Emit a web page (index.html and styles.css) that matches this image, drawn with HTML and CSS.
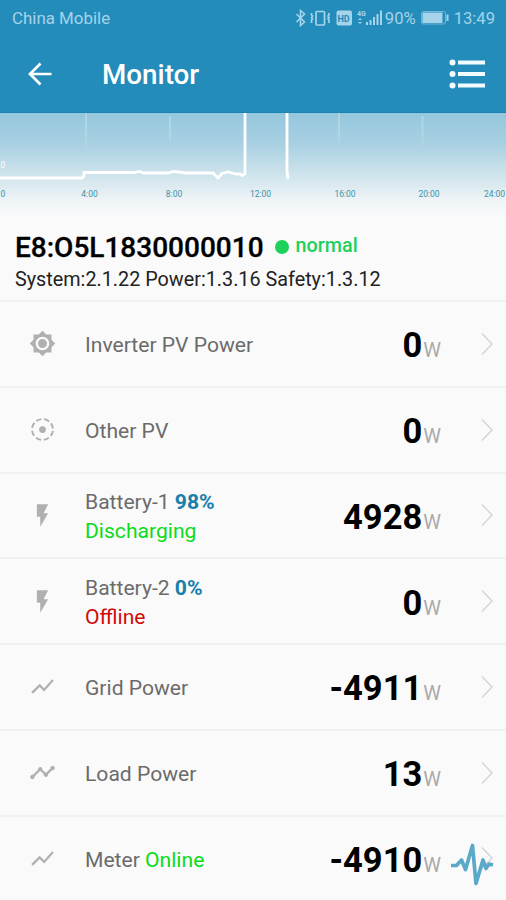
FILE: index.html
```
<!DOCTYPE html>
<html lang="en">
<head>
  <meta charset="UTF-8">
  <meta name="viewport" content="width=device-width, initial-scale=1.0">
  <title>Monitor</title>
  <link rel="stylesheet" href="styles.css">
</head>
<body>
  <svg class="defs" width="0" height="0">
    <symbol id="sun" viewBox="0 0 24 24"><path d="M20 8.69V4h-4.69L12 .69 8.69 4H4v4.69L.69 12 4 15.31V20h4.69L12 23.31 15.31 20H20v-4.69L23.31 12 20 8.69zM12 18c-3.31 0-6-2.69-6-6s2.69-6 6-6 6 2.69 6 6-2.69 6-6 6zm0-10c-2.21 0-4 1.79-4 4s1.79 4 4 4 4-1.79 4-4-1.79-4-4-4z"/></symbol>
    <symbol id="tilt" viewBox="0 0 24 24"><circle cx="12" cy="12" r="9.3" fill="none" stroke="currentColor" stroke-width="1.7" stroke-dasharray="4.9 2.4" stroke-dashoffset="-1.2"/><circle cx="12" cy="12" r="3"/></symbol>
    <symbol id="bolt" viewBox="0 0 24 24"><path d="M7 2v11h3v9l7-12h-4l4-8z"/></symbol>
    <symbol id="line" viewBox="0 0 24 24"><path d="M3.5 18.49l6-6.01 4 4L22 6.92l-1.41-1.41-7.09 7.97-4-4L2 16.99z"/></symbol>
    <symbol id="timeline" viewBox="0 0 24 24"><path d="M23 8c0 1.1-.9 2-2 2-.18 0-.35-.02-.51-.07l-3.56 3.55c.05.16.07.34.07.52 0 1.1-.9 2-2 2s-2-.9-2-2c0-.18.02-.36.07-.52l-2.55-2.55c-.16.05-.34.07-.52.07s-.36-.02-.52-.07l-4.55 4.56c.05.16.07.33.07.51 0 1.1-.9 2-2 2s-2-.9-2-2 .9-2 2-2c.18 0 .35.02.51.07l4.56-4.55C8.02 9.36 8 9.18 8 9c0-1.1.9-2 2-2s2 .9 2 2c0 .18-.02.36-.07.52l2.55 2.55c.16-.05.34-.07.52-.07s.36.02.52.07l3.55-3.56C19.02 8.35 19 8.18 19 8c0-1.1.9-2 2-2s2 .9 2 2z"/></symbol>
    <symbol id="chevron" viewBox="0 0 12 24"><path d="M1 1.5L11 12 1 22.5" fill="none" stroke="currentColor" stroke-width="1.4"/></symbol>
  </svg>

  <header>
    <div class="status-bar">
      <span class="carrier">China Mobile</span>
      <div class="status-icons">
        <svg width="90" height="20" viewBox="0 0 90 20" fill="none" stroke="currentColor">
          <path d="M1.5 6l8 8-4 3.500v-15l4 3.500-8 8" stroke-width="1.600"/>
          <rect x="21" y="3.500" width="8.500" height="13.500" rx="1" stroke-width="1.700"/>
          <path d="M16.500 5v2l1 1-1 1.500 1 1.500-1 1v3M34 5v2l-1 1 1 1.500-1 1.500 1 1v3" stroke-width="1.700"/>
          <rect x="41.500" y="2.500" width="15.500" height="15" rx="2" fill="currentColor" stroke="none"/>
          <text class="hd" x="42.500" y="13.500">HD</text>
          <text class="net" x="62" y="8">4G</text>
          <path d="M63 12l2-2 2 2zM63 14l2 2 2-2z" fill="currentColor" stroke="none"/>
          <path d="M72 17v-3M75.500 17v-5M79 17V9M82.500 17V6M86 17V2.500" stroke-width="2"/>
        </svg>
        <span class="percent">90%</span>
        <svg class="battery" width="28" height="14" viewBox="0 0 28 14">
          <rect x=".5" y=".5" width="24" height="12.500" rx="2" fill="none" stroke="currentColor" opacity=".6"/>
          <rect x="1.500" y="1.500" width="20" height="10.500" fill="currentColor"/>
          <path d="M26.500 3.500v6.500" stroke="currentColor" stroke-width="2"/>
        </svg>
        <span class="clock">13:49</span>
      </div>
    </div>
    <div class="title-bar">
      <svg width="24" height="24" viewBox="0 0 24 24"><path d="M23.500 12H2M12.500 1.500L2 12l10.500 10.500" fill="none" stroke="#fff" stroke-width="2.700"/></svg>
      <h1>Monitor</h1>
      <svg class="menu" width="36" height="30" viewBox="0 0 36 30" fill="#f2fbff">
        <circle cx="3.500" cy="3.500" r="3"/><rect x="9" y="1.500" width="27" height="4"/>
        <circle cx="3.500" cy="15" r="3"/><rect x="9" y="13" width="27" height="4"/>
        <circle cx="3.500" cy="26.500" r="3"/><rect x="9" y="24.500" width="27" height="4"/>
      </svg>
    </div>
  </header>

  <svg class="chart" width="506" height="105" viewBox="0 0 506 105">
    <path class="grid" d="M86 0v40M170 3v25M339 0v30M422.500 3v30"/>
    <path class="curve" d="M0 65H82q2 0 2-5.500h50l5-1 5 1.500h24l6-1.500 12 1.500h27l5 5 4-4.500 6-1.500 8 2 4 0 2 1.500 3-1.500V0"/>
    <path class="curve" d="M287 0v58l1 8"/>
    <g class="axis">
      <text x="3" y="55" class="y-label">0</text>
      <text x="3" y="84">0</text>
      <text x="89.500" y="84">4:00</text>
      <text x="174" y="84">8:00</text>
      <text x="260.500" y="84">12:00</text>
      <text x="345" y="84">16:00</text>
      <text x="429" y="84">20:00</text>
      <text x="494.500" y="84">24:00</text>
    </g>
  </svg>

  <section class="device">
    <div class="device-name">
      <h2>E8:O5L1830000010</h2>
      <span class="dot"></span>
      <span class="state">normal</span>
    </div>
    <p class="versions">System:2.1.22 Power:1.3.16 Safety:1.3.12</p>
  </section>

  <ul class="rows">
    <li>
      <svg class="icon"><use href="#sun"/></svg>
      <div class="label">Inverter PV Power</div>
      <div class="value">0<small>W</small></div>
      <svg class="chevron"><use href="#chevron"/></svg>
    </li>
    <li>
      <svg class="icon"><use href="#tilt"/></svg>
      <div class="label">Other PV</div>
      <div class="value">0<small>W</small></div>
      <svg class="chevron"><use href="#chevron"/></svg>
    </li>
    <li>
      <svg class="icon"><use href="#bolt"/></svg>
      <div class="label">Battery-1 <b>98%</b><br><span class="online">Discharging</span></div>
      <div class="value">4928<small>W</small></div>
      <svg class="chevron"><use href="#chevron"/></svg>
    </li>
    <li>
      <svg class="icon"><use href="#bolt"/></svg>
      <div class="label">Battery-2 <b>0%</b><br><span class="offline">Offline</span></div>
      <div class="value">0<small>W</small></div>
      <svg class="chevron"><use href="#chevron"/></svg>
    </li>
    <li>
      <svg class="icon"><use href="#line"/></svg>
      <div class="label">Grid Power</div>
      <div class="value">-4911<small>W</small></div>
      <svg class="chevron"><use href="#chevron"/></svg>
    </li>
    <li>
      <svg class="icon"><use href="#timeline"/></svg>
      <div class="label">Load Power</div>
      <div class="value">13<small>W</small></div>
      <svg class="chevron"><use href="#chevron"/></svg>
    </li>
    <li>
      <svg class="icon"><use href="#line"/></svg>
      <div class="label">Meter <span class="online">Online</span></div>
      <div class="value">-4910<small>W</small></div>
      <svg class="chevron"><use href="#chevron"/></svg>
    </li>
  </ul>

  <!-- floating shortcut over the list -->
  <svg class="pulse" width="44" height="44" viewBox="0 0 44 44">
    <path d="M1 22.500h5.500l5-5.500 4 9.500L22.500 2.500l3.500 38 7-23.500 3 8.500 3-4.500 4 1" fill="none" stroke="#5ba9c9" stroke-width="3.700" stroke-linejoin="round"/>
  </svg>
</body>
</html>
```
FILE: styles.css
```
* {
  box-sizing: border-box;
}

body {
  margin: 0;
  height: 900px;
  overflow: hidden;
  position: relative;
  background: #fafafa;
  font-family: Roboto, "Liberation Sans", sans-serif;
  color: #000;
}

.defs {
  position: absolute;
}

header {
  height: 113px;
  background: #238cba;
  border-bottom: 1px solid #1a83b1;
}

.status-bar {
  display: flex;
  justify-content: space-between;
  align-items: center;
  height: 36px;
  padding: 0 11px 0 12px;
  color: #a5d3ea;
  font-size: 16.9px;
}

.status-icons {
  display: flex;
  align-items: center;
  font-size: 16.6px;
}

.percent {
  margin-right: 5px;
}

.battery {
  margin-right: 5px;
}

.hd {
  font-size: 9px;
  font-weight: 700;
  fill: #238cba;
  stroke: none;
}

.net {
  font-size: 7px;
  font-weight: 700;
  fill: currentColor;
  stroke: none;
}

.title-bar {
  display: flex;
  align-items: center;
  height: 76px;
  padding: 0 21px 0 28px;
}

h1 {
  margin: 0 0 0 50px;
  font-size: 27.8px;
  font-weight: 500;
  color: #fff;
}

.menu {
  margin-left: auto;
}

.chart {
  display: block;
  background: linear-gradient(#94c7dd, #a9d0e2 30%, #d0e4ec 60%, #f0f5f7 85%, #fafafa);
}

.grid {
  fill: none;
  stroke: #b0d5e3;
  stroke-width: 2;
}

.curve {
  fill: none;
  stroke: #fff;
  stroke-width: 2.8;
}

.axis {
  font-size: 8.5px;
  fill: #3b93a8;
  text-anchor: middle;
}

.axis .y-label {
  fill: #fff;
}

.device {
  height: 82px;
  padding: 12px 15px 0;
}

.device-name {
  display: flex;
  align-items: center;
  height: 34px;
}

h2 {
  margin: 1px 0 0;
  font-size: 28px;
  font-weight: 500;
  -webkit-text-stroke: .3px #000;
}

.dot {
  width: 14px;
  height: 14px;
  margin: 0 7px 0 11px;
  border-radius: 50%;
  background: #1dd15b;
}

.state {
  margin-top: -3px;
  font-size: 19.8px;
  font-weight: 500;
  color: #1dd15b;
}

.versions {
  margin: 2px 0 0;
  font-size: 19.8px;
  line-height: 28px;
  color: #222;
}

.rows {
  margin: 0;
  padding: 0;
  list-style: none;
}

.rows li {
  display: flex;
  align-items: center;
  height: 85.75px;
  padding: 0 13px 0 29px;
  border-top: 2px solid #f1f1f1;
}

.icon {
  width: 27px;
  height: 27px;
  margin-right: 29px;
  color: #b0b0b0;
  fill: currentColor;
}

.label {
  flex: 1;
  padding-top: 3px;
  font-size: 21.1px;
  line-height: 28.5px;
  color: #6b6b6b;
}

.label b {
  font-weight: 700;
  color: #1680ab;
}

.online {
  color: #0bdc18;
}

.offline {
  color: #cf0a0a;
}

.value {
  padding-top: 3px;
  font-size: 34.5px;
  font-weight: 700;
}

.value small {
  margin-left: 1px;
  font-size: 20px;
  font-weight: 400;
  color: #aaa;
}

.chevron {
  width: 12px;
  height: 24px;
  margin-left: 40px;
  color: #d4d4d4;
}

.pulse {
  position: absolute;
  left: 450px;
  top: 843px;
}
```
